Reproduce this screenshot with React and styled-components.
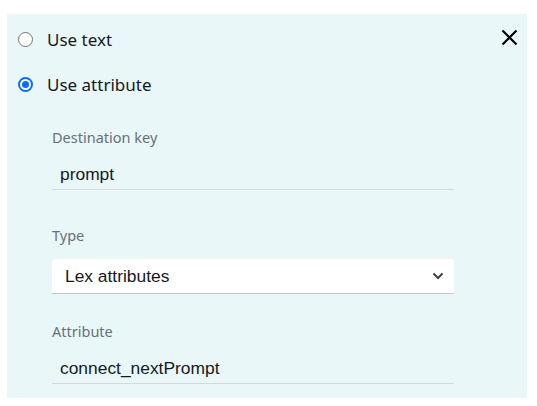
import React from 'react';
import styled, { createGlobalStyle } from 'styled-components';

const GlobalStyle = createGlobalStyle`
  body {
    margin: 0;
    background: #ffffff;
    font-family: "Noto Sans", "Open Sans", sans-serif;
  }
`;

const Panel = styled.section`
  position: relative;
  box-sizing: border-box;
  margin: 14px 0 0 7px;
  width: 520px;
  height: 384px;
  padding: 3px 0 0 0;
  background: #e9f7f9;
`;

const CloseButton = styled.button`
  position: absolute;
  top: 12px;
  right: 7px;
  width: 22px;
  height: 22px;
  padding: 0;
  border: none;
  background: transparent;
  display: flex;
  align-items: center;
  justify-content: center;
  cursor: pointer;
`;

const RadioRow = styled.label`
  display: flex;
  align-items: center;
  height: 45px;
  padding-left: 11px;
  gap: 14px;
  font-size: 17px;
  color: #16191f;
  cursor: pointer;
`;

const RadioDot = styled.span`
  box-sizing: border-box;
  width: 15px;
  height: 15px;
  border-radius: 50%;
  border: ${p => (p.$checked ? '2px solid #0a6cff' : '1px solid #767676')};
  background: #ffffff;
  display: flex;
  align-items: center;
  justify-content: center;
  &::after {
    content: '';
    display: ${p => (p.$checked ? 'block' : 'none')};
    width: 7px;
    height: 7px;
    border-radius: 50%;
    background: #0a6cff;
  }
`;

const Fields = styled.div`
  display: flex;
  flex-direction: column;
  width: 402px;
  margin-left: 45px;
`;

const Field = styled.div`
  display: flex;
  flex-direction: column;
  gap: 13px;
  margin-top: ${p => p.$top}px;
`;

const Label = styled.div`
  height: 20px;
  line-height: 20px;
  font-size: 14.5px;
  color: #687078;
`;

const TextValue = styled.div`
  box-sizing: border-box;
  height: 30px;
  line-height: 29px;
  padding-left: 8px;
  font-family: "Liberation Sans", Arial, sans-serif;
  font-size: 17.4px;
  color: #16191f;
  border-bottom: 1px solid #d5d9dc;
`;

const Select = styled.div`
  box-sizing: border-box;
  height: 35px;
  margin-top: 1px;
  display: flex;
  align-items: center;
  justify-content: space-between;
  padding: 0 10px 0 13px;
  background: #ffffff;
  border-radius: 4px 4px 0 0;
  border-bottom: 1px solid #c6c6c6;
  font-family: "Liberation Sans", Arial, sans-serif;
  font-size: 17.4px;
  color: #16191f;
`;

export default function App() {
  return (
    <>
      <GlobalStyle />
      <Panel>
        <CloseButton aria-label="close">
          <svg width="17" height="17" viewBox="0 0 17 17">
            <path d="M1.5 1.5 L15.5 15.5 M15.5 1.5 L1.5 15.5" stroke="#000" strokeWidth="2.2" />
          </svg>
        </CloseButton>
        <RadioRow>
          <RadioDot />
          Use text
        </RadioRow>
        <RadioRow>
          <RadioDot $checked />
          Use attribute
        </RadioRow>
        <Fields>
          <Field $top={20}>
            <Label>Destination key</Label>
            <TextValue>prompt</TextValue>
          </Field>
          <Field $top={35}>
            <Label>Type</Label>
            <Select>
              Lex attributes
              <svg width="12" height="8" viewBox="0 0 12 8">
                <path d="M1.5 1.5 L6 6 L10.5 1.5" fill="none" stroke="#3d4145" strokeWidth="2" />
              </svg>
            </Select>
          </Field>
          <Field $top={27}>
            <Label>Attribute</Label>
            <TextValue>connect_nextPrompt</TextValue>
          </Field>
        </Fields>
      </Panel>
    </>
  );
}
